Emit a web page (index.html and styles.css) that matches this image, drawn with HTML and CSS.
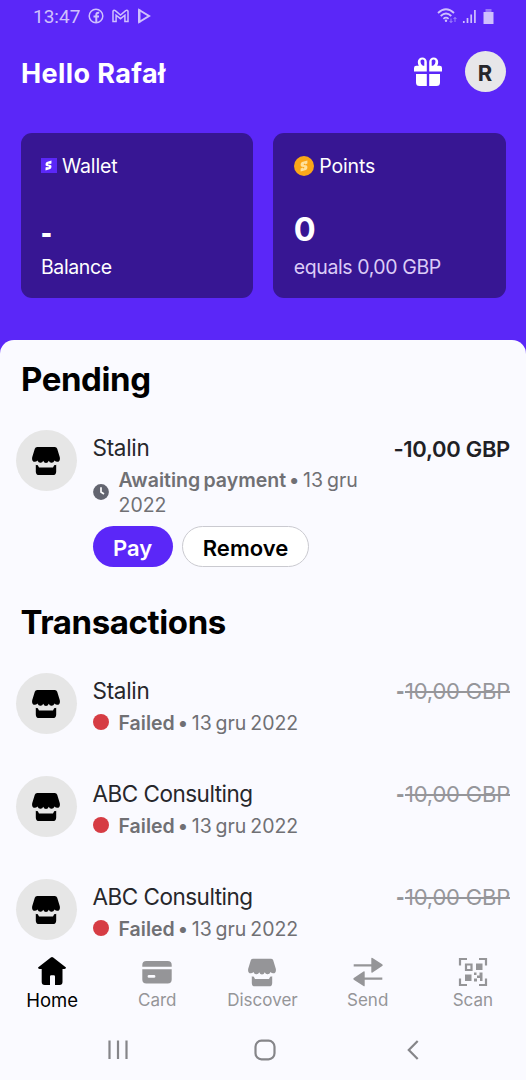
FILE: index.html
```html
<!DOCTYPE html>
<html lang="pl">
<head>
<meta charset="utf-8">
<meta name="viewport" content="width=device-width, initial-scale=1">
<title>Wallet</title>
<link rel="stylesheet" href="styles.css">
</head>
<body>
<svg width="0" height="0" class="defs" aria-hidden="true">
  <symbol id="shop" viewBox="0 0 28 28">
    <path d="M5.200 0H22.800Q24.600 0 25.200 1.700L27.800 10.200Q28.500 14.800 25.200 14.800Q23.600 14.800 22.600 13.400Q21.400 16 19.400 15.800Q17.500 15.800 16.800 13.800Q15.900 16 14 16Q12.100 16 11.200 13.800Q10.500 15.800 8.600 15.800Q6.600 16 5.400 13.400Q4.400 14.800 2.800 14.800Q-.5 14.800 .2 10.200L2.800 1.700Q3.400 0 5.200 0Z"/>
    <path d="M3.800 17.800Q4.500 18.300 5.700 18.100L7 20.500H21L22.300 18.100Q23.500 18.300 24.200 17.800V24.400Q24.200 28 20.800 28H7.200Q3.800 28 3.800 24.400Z"/>
  </symbol>
  <symbol id="spark" viewBox="0 0 8 12">
    <path d="M7.400 .4V3.600L5 4.500V3.600L3.800 4.100V5.100L6.200 5.300Q7.600 5.600 7.400 7.500Q7.400 9.200 6 10L.6 11.600V8.400L3 7.500V8.400L4.200 7.900V6.900L1.800 6.700Q.4 6.400 .6 4.500Q.6 2.800 2 2Z"/>
  </symbol>
</svg>
<div class="phone">
  <header class="top">
    <div class="status">
      <span class="time">13:47</span>
      <svg class="st-icons" width="64" height="18" viewBox="0 0 64 18" fill="none" stroke="currentColor" stroke-width="1.500">
        <circle cx="9" cy="9" r="6.800"/>
        <path d="M9.300 15.500V8Q9.300 5.400 12.200 5.800M6.500 9.500H12" stroke-width="2"/>
        <path d="M26 14.500V4.200Q26.800 2.600 28.300 3.700L33.500 8L38.700 3.700Q40.200 2.600 41 4.200V14.500H37.900V8.200L33.500 11.700L29.100 8.200V14.500Z" stroke-width="1.500"/>
        <path d="M52.200 3L62 9L52.200 15Z" stroke-width="2"/>
        <path d="M52.200 2.500V15.500" stroke-width="2.400"/>
      </svg>
      <svg class="st-right" width="60" height="18" viewBox="0 0 60 18" fill="none" stroke="currentColor" stroke-width="1.800">
        <path d="M2 6Q10 -1.500 18 6M4.700 9Q10 4 15.300 9M7.400 11.800Q10 9.400 12.600 11.800"/>
        <circle cx="10" cy="13.800" r="1.200" fill="currentColor" stroke="none"/>
        <path d="M15 11.500V15.500M13.500 14L15 15.500L16.500 14M19 15V10.500M17.500 12L19 10.500L20.500 12" stroke-width=".9" opacity=".65"/>
        <path d="M27.800 16V14M31.500 16V11M35.200 16V7.500M38.900 16V3" stroke-width="1.700"/>
        <path d="M47.500 5H57.500V17H47.500Z" fill="currentColor" stroke="none"/>
        <path d="M49.500 2H55.500V5H49.500Z" fill="currentColor" stroke="none" opacity=".5"/>
      </svg>
    </div>
    <div class="greet">
      <h1>Hello Rafał</h1>
      <svg class="gift" width="30" height="30" viewBox="0 0 30 30">
        <path fill="#fff" d="M13.800 14.500H1V11Q1 8.700 3.300 8.700H5.800Q4.800 7.200 4.800 5A4.500 4.500 0 0 1 13.800 5ZM9.900 8.700H11.300V5.200A1.900 2.100 0 1 0 7.600 5.200Q7.600 7.800 9.900 8.700ZM16.200 14.500H29V11Q29 8.700 26.700 8.700H24.200Q25.200 7.200 25.200 5A4.500 4.500 0 0 0 16.200 5ZM20.100 8.700H18.700V5.200A1.900 2.100 0 1 1 22.400 5.200Q22.400 7.800 20.100 8.700Z" fill-rule="evenodd"/>
        <path fill="#fff" d="M3 17H13.800V29H6.500Q3 29 3 25.500ZM16.200 17H27V25.500Q27 29 23.500 29H16.200Z"/>
      </svg>
      <div class="user">R</div>
    </div>
    <div class="cards">
      <section class="card">
        <div class="card-head"><span class="wallet-mark"><svg width="7" height="11"><use href="#spark"/></svg></span><span class="w-head">Wallet</span></div>
        <div class="value dash">-</div>
        <div class="note">Balance</div>
      </section>
      <section class="card">
        <div class="card-head"><span class="coin"><svg width="8" height="12"><use href="#spark"/></svg></span><span class="w-head">Points</span></div>
        <div class="value">0</div>
        <div class="note soft">equals 0,00 GBP</div>
      </section>
    </div>
  </header>
  <main class="sheet">
    <h2 class="h-pending">Pending</h2>
    <article class="row pending">
      <div class="avatar"><svg width="28" height="28"><use href="#shop"/></svg></div>
      <div class="info">
        <div class="name">Stalin</div>
        <div class="meta wait">
          <svg width="16" height="16" viewBox="0 0 16 16"><circle cx="8" cy="8" r="7.900" fill="#636570"/><path d="M8 3.300V8L11 10" fill="none" stroke="#fff" stroke-width="1.700"/></svg>
          <p><b>Awaiting payment •</b> 13 gru<br>2022</p>
        </div>
        <div class="actions"><button class="btn pay">Pay</button><button class="btn remove">Remove</button></div>
      </div>
      <div class="amount">-10,00 GBP</div>
    </article>
    <h2 class="h-trans">Transactions</h2>
    <article class="row">
      <div class="avatar"><svg width="28" height="28"><use href="#shop"/></svg></div>
      <div class="info"><div class="name">Stalin</div><div class="meta"><i class="dot"></i><p><b>Failed •</b> 13 gru 2022</p></div></div>
      <div class="amount off"><b>-</b><s>10,00 GBP</s></div>
    </article>
    <article class="row">
      <div class="avatar"><svg width="28" height="28"><use href="#shop"/></svg></div>
      <div class="info"><div class="name abc">ABC Consulting</div><div class="meta"><i class="dot"></i><p><b>Failed •</b> 13 gru 2022</p></div></div>
      <div class="amount off"><b>-</b><s>10,00 GBP</s></div>
    </article>
    <article class="row last">
      <div class="avatar"><svg width="28" height="28"><use href="#shop"/></svg></div>
      <div class="info"><div class="name abc">ABC Consulting</div><div class="meta"><i class="dot"></i><p><b>Failed •</b> 13 gru 2022</p></div></div>
      <div class="amount off"><b>-</b><s>10,00 GBP</s></div>
    </article>
  </main>
  <nav class="tabs">
    <a class="tab active"><svg width="30" height="30" viewBox="0 0 30 30" fill="currentColor"><path d="M13.800 .5Q15 -.4 16.200 .5L29 10.600Q29 12 27.500 12H25.500V25Q25.500 28 22.500 28H18V19.500Q18 18.300 16.800 18.300H14.200Q13 18.300 13 19.500V28H7.700Q4.700 28 4.700 25V12H2.500Q1 12 1 10.600Z"/></svg><span>Home</span></a>
    <a class="tab"><svg width="30" height="30" viewBox="0 0 30 30" fill="currentColor"><path d="M.3 9.700V8Q.3 4 4.300 4H25.700Q29.700 4 29.700 8V9.700ZM.3 12.300H29.700V22.500Q29.700 26.500 25.700 26.500H4.300Q.3 26.500 .3 22.500ZM7 18A1.400 1.400 0 0 0 7 20.800H12A1.400 1.400 0 0 0 12 18Z" fill-rule="evenodd"/></svg><span>Card</span></a>
    <a class="tab"><svg width="28" height="30" viewBox="0 -1.500 28 30" fill="currentColor"><use href="#shop" width="28" height="28"/></svg><span>Discover</span></a>
    <a class="tab"><svg width="30" height="30" viewBox="0 0 30 30" fill="currentColor"><path d="M.7 7.300H18.300V1.500Q18.300 .2 19.500 .9L29.200 7.300Q30.200 8.200 29.200 9L19.500 15.500Q18.300 16.100 18.300 14.800V9.400H.7ZM29.300 20.600V22.700H11.700V28.500Q11.700 29.800 10.500 29.100L.8 22.700Q-.2 21.800 .8 21L10.500 14.500Q11.700 13.900 11.700 15.200V20.600Z"/></svg><span>Send</span></a>
    <a class="tab"><svg width="30" height="30" viewBox="0 0 30 30" fill="none" stroke="currentColor" stroke-width="2.200"><path d="M2 8.500V2H9M21 2H28V8.500M2 21.500V28H9M21 28H28V21.500"/><path d="M8 7.500H13.500V13H8Z"/><path d="M18 6.500H24.500V13H18ZM7 17.500H13.500V24H7ZM19 18.500H21.500V15.500H24.500V24H22V21H19ZM16 21.500H19V24.500H16ZM16 15.500H18.500V18H16Z" fill="currentColor" stroke="none"/></svg><span>Scan</span></a>
  </nav>
  <footer class="system">
    <svg width="20" height="22" viewBox="0 0 20 22"><path d="M1.500 1.500V20M10 1.500V20M18.500 1.500V20"/></svg>
    <svg class="home-key" width="22" height="22" viewBox="0 0 22 22"><rect x="1.500" y="1.700" width="19" height="18.600" rx="6"/></svg>
    <svg width="12" height="22" viewBox="0 0 12 22"><path d="M10.700 2L1.800 11L10.700 20"/></svg>
  </footer>
</div>
</body>
</html>
```

FILE: styles.css
```css
* { box-sizing: border-box; }
body { margin: 0; font-family: Inter, "Liberation Sans", sans-serif; background: #fafaff; }
h1, h2, p { margin: 0; }
.defs { position: absolute; }
.phone { width: 526px; height: 1080px; overflow: hidden; display: flex; flex-direction: column; background: #5b27f8; }

.top { height: 339.500px; flex: none; }
.status { height: 32px; padding: 1px 30px 0 33px; display: flex; align-items: center; color: #cfc0fd; }
.time { width: 54px; font: 19px/32px Roboto, sans-serif; padding-top: 1px; }
.st-icons { flex: none; margin-top: -1px; }
.st-right { margin-left: auto; margin-top: -2px; }

.greet { height: 79px; padding: 0 20.500px 0 21px; display: flex; align-items: center; }
h1 { flex: 1; color: #fff; font-size: 27px; line-height: 36px; font-weight: 700; letter-spacing: .4px; padding-top: 5px; }
.gift { margin-right: 21.500px; }
.user { width: 41px; height: 41px; border-radius: 50%; background: #e7e6e9; color: #26262b; font-size: 22px; line-height: 44px; font-weight: 700; text-align: center; }

.cards { margin-top: 21.500px; padding: 0 20.500px; display: grid; grid-template-columns: 1fr 1fr; gap: 20.500px; }
.card { height: 165.500px; padding: 20px 20.500px 0; border-radius: 11px; background: #371693; color: #fff; }
.card-head { height: 26px; display: flex; align-items: center; gap: 5.500px; font-size: 19.500px; line-height: 26px; }
.w-head { letter-spacing: -.15px; }
.wallet-mark { width: 15.500px; height: 15.500px; background: #5b27f8; display: grid; place-items: center; fill: #fff; }
.coin { width: 20px; height: 20px; border-radius: 50%; background: #fba718; display: grid; place-items: center; fill: #ffe19a; }
.value { margin-top: 29px; padding-top: 1px; height: 42px; font-size: 32.500px; line-height: 42px; font-weight: 700; }
.dash { font-family: "Liberation Sans", Arial, sans-serif; padding-top: 4px; }
.note { margin-top: 3px; font-size: 19.500px; line-height: 28px; letter-spacing: -.4px; }
.soft { color: #dcccf7; }

.sheet { flex: 1; min-height: 0; background: #fafaff; border-radius: 14px 14px 0 0; color: #000; overflow: hidden; }
h2 { padding-left: 21px; font-size: 33px; line-height: 40px; font-weight: 700; letter-spacing: -.4px; }
.h-pending { margin-top: 19px; }
.row { height: 103px; padding: 0 16px 0 15.500px; display: flex; align-items: flex-start; }
.pending { margin-top: 31.500px; height: 172px; }
.h-trans { padding-left: 20.500px; }
.h-trans + .row { margin-top: 31px; }
.avatar { width: 61px; height: 61px; margin-right: 16px; flex: none; border-radius: 50%; background: #e6e6e6; display: grid; place-items: center; }
.info { flex: 1; }
.name { font-size: 22.500px; line-height: 36px; color: #27272b; letter-spacing: -.3px; }
.abc { letter-spacing: -.5px; }
.meta { display: flex; align-items: center; gap: 10px; font-size: 19.500px; line-height: 25px; color: #707074; }
.meta p { white-space: nowrap; word-spacing: -1.600px; padding-top: 2px; }
.meta b { font-weight: 600; }
.meta svg { flex: none; margin-bottom: 1px; }
.dot { width: 16px; height: 16px; margin-bottom: 1px; border-radius: 50%; background: #d63c44; }
.actions { display: flex; gap: 9.500px; margin-top: 8px; }
.btn { height: 41px; border: 0; border-radius: 21px; padding: 3px 0 0; font: 600 22px/38px Inter, sans-serif; }
.pay { width: 80px; background: #5b27f8; color: #fff; }
.remove { width: 127px; background: #fff; color: #000; border: 1px solid #cacad0; padding-top: 2px; }
.amount { font-size: 22px; line-height: 38px; font-weight: 600; color: #202024; white-space: nowrap; letter-spacing: -.3px; }
.off { font-weight: 400; color: #96969a; line-height: 36px; letter-spacing: -.2px; }
.off b { font: 700 24px/30px "Liberation Sans", Arial, sans-serif; margin-right: 1px; }
.off s { text-decoration-thickness: 1.500px; }

.tabs { flex: none; height: 69px; background: #fafaff; display: grid; grid-template-columns: repeat(5, 105.200px); color: #959598; }
.tab { display: flex; flex-direction: column; align-items: center; font-size: 17px; padding: 4px 1px 0 0; line-height: 27px; }
.active { color: #000; font-size: 18.500px; }
.system { flex: none; height: 58px; padding: 0 107.500px 3px 108px; background: #fafaff; display: flex; justify-content: space-between; align-items: center; fill: none; stroke: #858589; stroke-width: 2.200px; }
.home-key { margin-right: 4px; }
```
